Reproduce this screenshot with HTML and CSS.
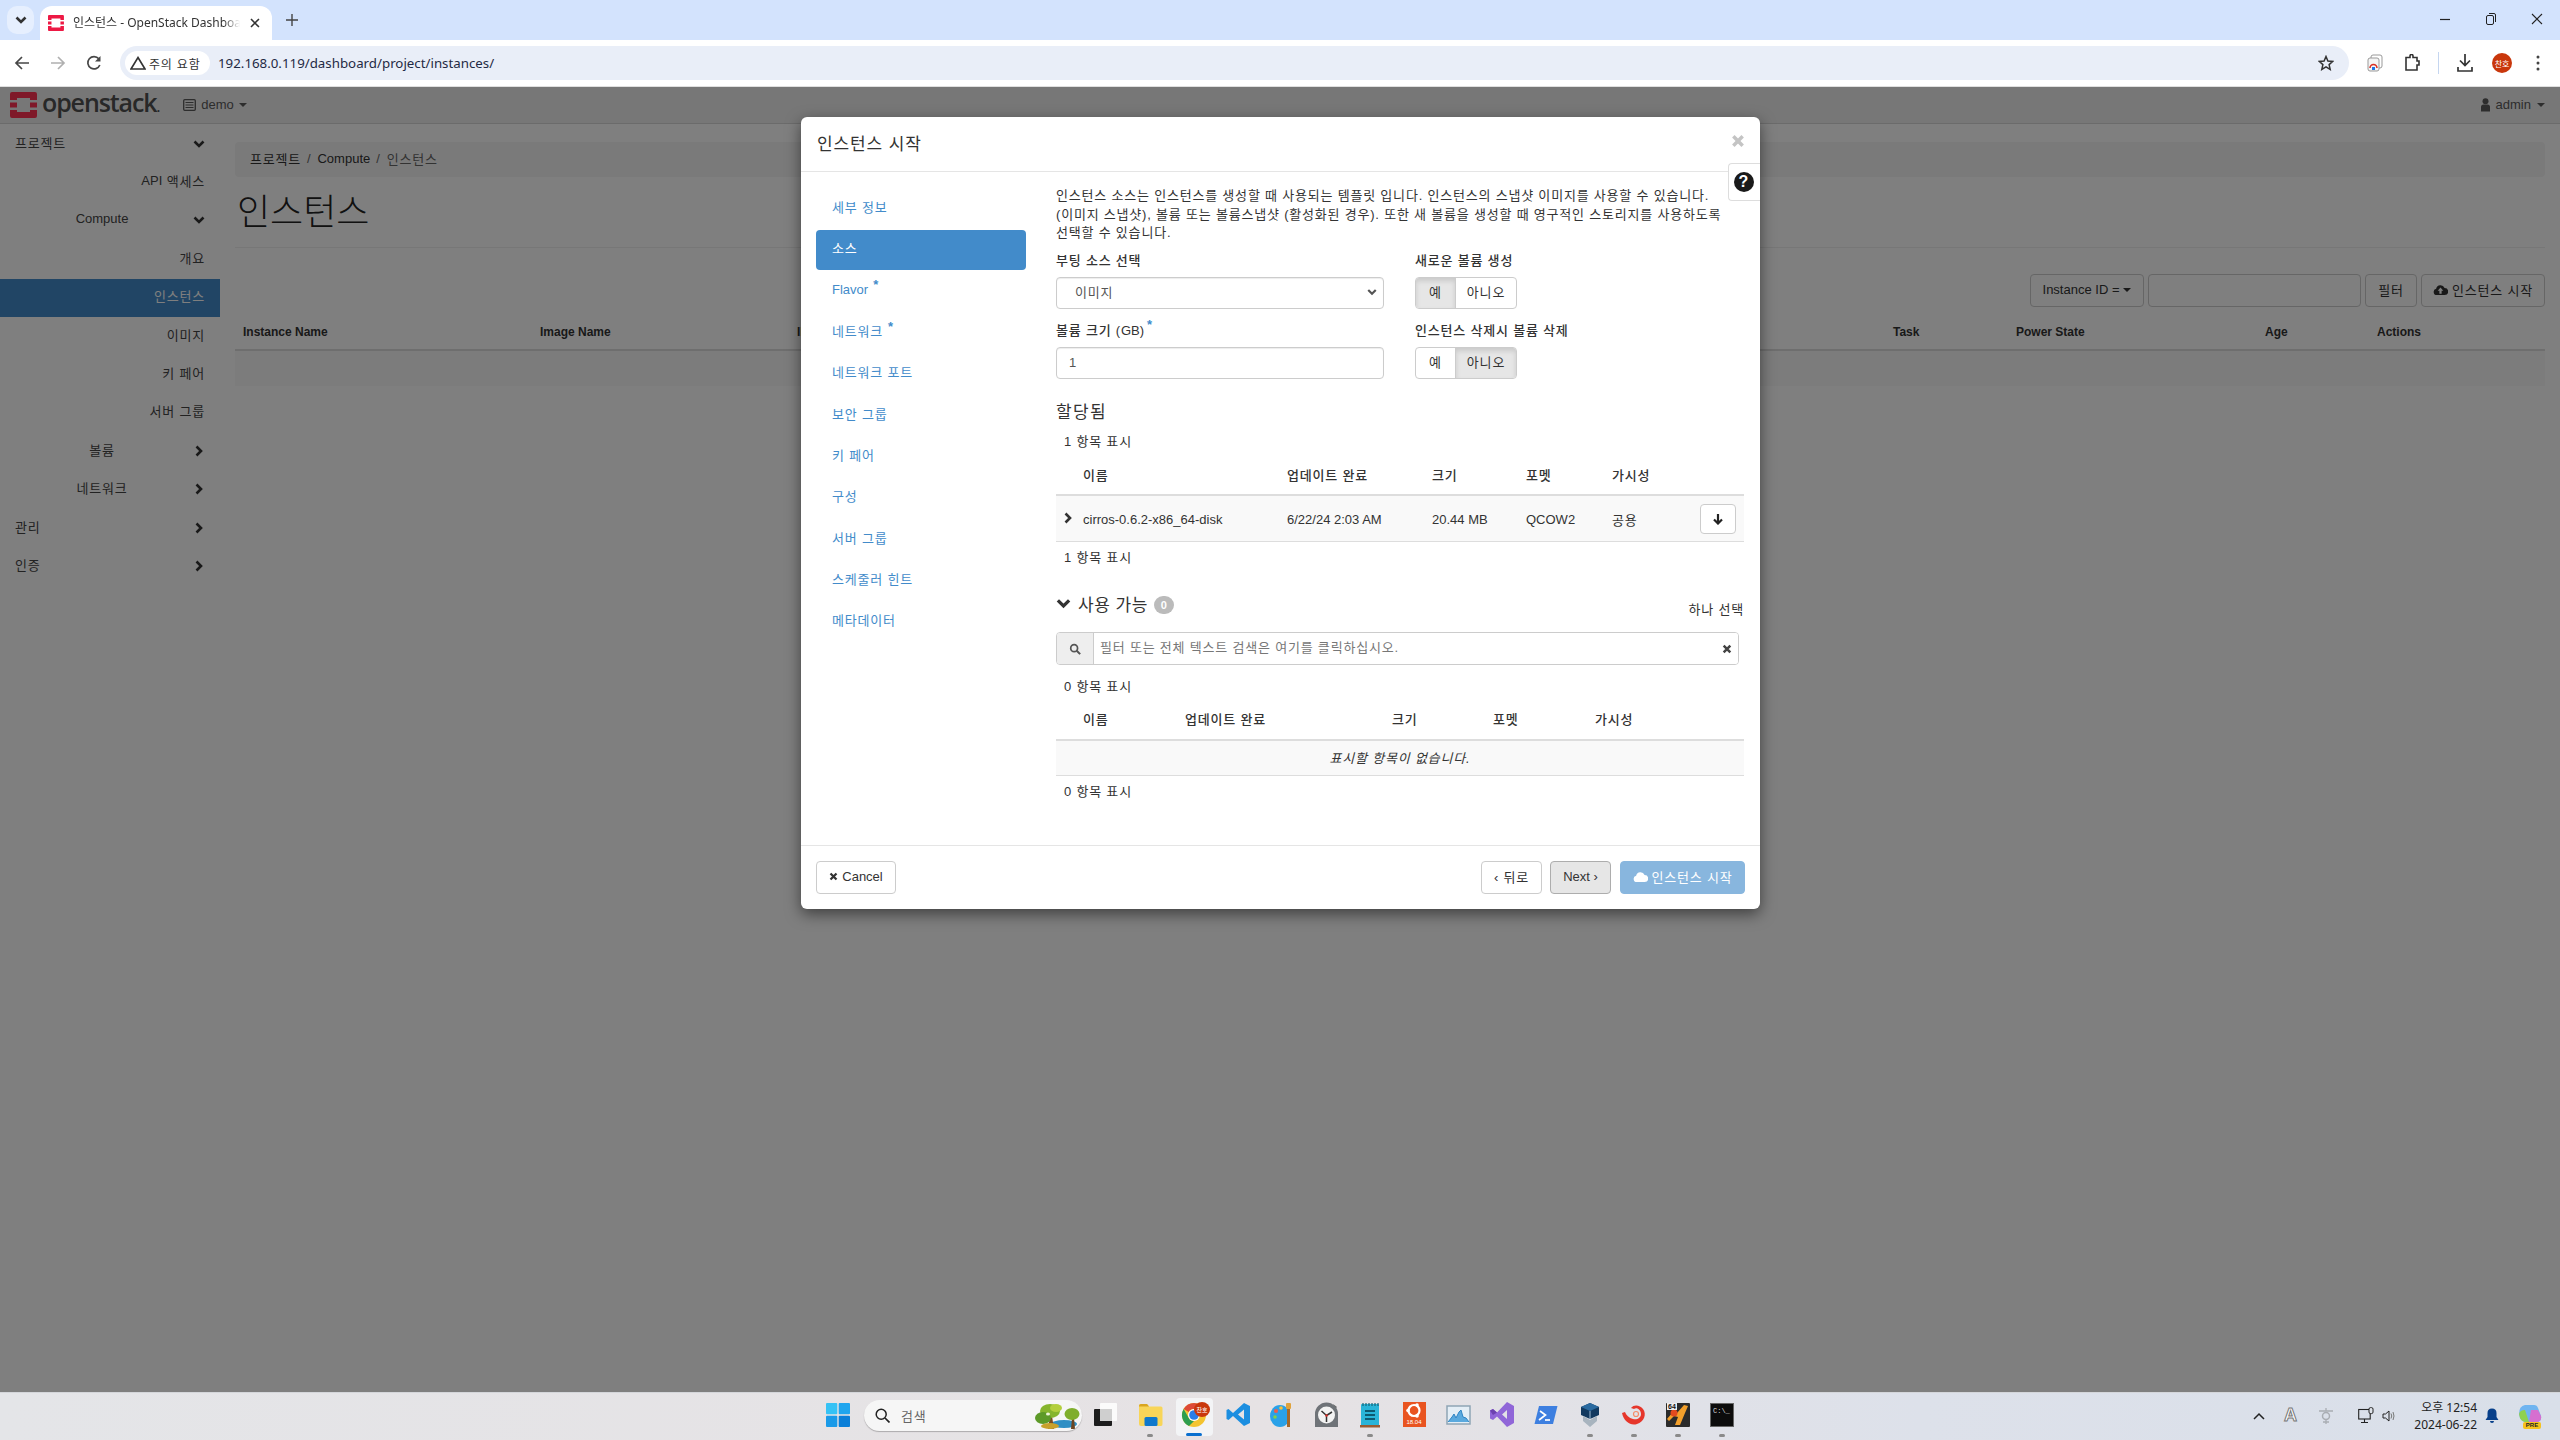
FILE: index.html
```html
<!DOCTYPE html>
<html lang="ko">

<head>
    <meta charset="utf-8" />
    <title>인스턴스 - OpenStack Dashboard</title>
    <link rel="stylesheet" href="styles.css">
</head>

<body>
    <svg class="defs" width="0" height="0">
        <symbol id="i-chev-down" viewBox="0 0 12 12"><path d="M1.5 3.5 L6 8 L10.500 3.500" fill="none" stroke="currentColor" stroke-width="2.600" /></symbol>
        <symbol id="i-chev-right" viewBox="0 0 12 12"><path d="M3.500 1.500 L8 6 L3.500 10.500" fill="none" stroke="currentColor" stroke-width="2.600" /></symbol>
        <symbol id="i-times" viewBox="0 0 12 12"><path d="M2 2 L10 10 M10 2 L2 10" fill="none" stroke="currentColor" stroke-width="3" /></symbol>
        <symbol id="i-cloud" viewBox="0 0 16 14"><path d="M4 13 A3.500 3.500 0 0 1 3.300 6.100 A4.800 4.800 0 0 1 12.400 5.400 A3.800 3.800 0 0 1 12.500 13 Z" fill="currentColor" /><path d="M8 4.800 L11 8.300 H9.200 V11.500 H6.800 V8.300 H5 Z" fill="#fff" /></symbol>
        <symbol id="i-search" viewBox="0 0 14 14"><circle cx="6" cy="6" r="4" fill="none" stroke="currentColor" stroke-width="2" /><path d="M9 9 L13 13" stroke="currentColor" stroke-width="2.400" /></symbol>
    </svg>

    <header class="tabstrip">
        <div class="tab-list-btn"><svg width="12" height="12"><use href="#i-chev-down" /></svg></div>
        <div class="tab">
            <svg class="favicon" width="16" height="16" viewBox="0 0 16 16">
                <path d="M1 0 H15 Q16 0 16 1 V5 H12.500 V3.500 H3.500 V5 H0 V1 Q0 0 1 0 Z M0 11 H3.500 V12.500 H12.500 V11 H16 V15 Q16 16 15 16 H1 Q0 16 0 15 Z M0 6.500 H3.500 V9.500 H0 Z M12.500 6.500 H16 V9.500 H12.500 Z" fill="#ed1944" />
            </svg>
            <span class="tab-title">인스턴스 - OpenStack Dashboard</span>
            <svg class="tab-close" width="10" height="10" viewBox="0 0 10 10"><path d="M1 1 L9 9 M9 1 L1 9" stroke="#333" stroke-width="1.600" /></svg>
        </div>
        <div class="tab-new">
            <svg width="12" height="12" viewBox="0 0 12 12"><path d="M6 0 V12 M0 6 H12" stroke="#444" stroke-width="1.400" /></svg>
        </div>
        <div class="win-controls">
            <svg width="12" height="12" viewBox="0 0 12 12"><path d="M1 6.500 H11" stroke="#222" stroke-width="1.200" /></svg>
            <svg width="12" height="14" viewBox="0 0 12 14"><rect x="1.500" y="3.500" width="7" height="9" rx="1.500" fill="none" stroke="#222" /><path d="M4 1.500 H9 Q10.500 1.500 10.500 3 V10" fill="none" stroke="#222" /></svg>
            <svg width="12" height="12" viewBox="0 0 12 12"><path d="M1 1 L11 11 M11 1 L1 11" stroke="#222" stroke-width="1.100" /></svg>
        </div>
    </header>

    <div class="toolbar">
        <svg class="tool" width="16" height="16" viewBox="0 0 16 16"><path d="M15 8 H2 M8 2 L2 8 L8 14" fill="none" stroke="#474747" stroke-width="1.700" /></svg>
        <svg class="tool" width="16" height="16" viewBox="0 0 16 16"><path d="M1 8 H14 M8 2 L14 8 L8 14" fill="none" stroke="#b0b0b0" stroke-width="1.700" /></svg>
        <svg class="tool" width="16" height="16" viewBox="0 0 16 16"><path d="M13.800 10 A6.200 6.200 0 1 1 12.800 3.800" fill="none" stroke="#474747" stroke-width="1.700" /><path d="M14.500 1 V6.500 H9 Z" fill="#474747" /></svg>
        <div class="omnibox">
            <div class="chip">
                <svg width="16" height="14" viewBox="0 0 16 14"><path d="M8 1.500 L15 13 H1 Z" fill="none" stroke="#333" stroke-width="1.600" /></svg>
                <span>주의 요함</span>
            </div>
            <span class="url">192.168.0.119/dashboard/project/instances/</span>
            <svg class="star" width="16" height="16" viewBox="0 0 16 16"><path d="M8 1.500 L9.900 6 L14.800 6.400 L11.100 9.600 L12.200 14.400 L8 11.900 L3.800 14.400 L4.900 9.600 L1.200 6.400 L6.100 6 Z" fill="none" stroke="#333" stroke-width="1.500" /></svg>
        </div>
        <div class="tool-right">
            <svg width="16" height="20" viewBox="0 0 16 20"><rect x="4" y="2" width="11" height="13" rx="2" fill="#fff" stroke="#999" /><rect x="1" y="5" width="11" height="13" rx="2" fill="#f4f4f4" stroke="#999" /><path d="M3 15 A3.500 3.500 0 0 1 10 15" fill="none" stroke="#d93025" stroke-width="1.600" /><rect x="5" y="14" width="3" height="3" fill="#1a73e8" /></svg>
            <svg width="16" height="18" viewBox="0 0 16 18"><path d="M2 3.500 H6 V2 A1.500 1.500 0 0 1 9 2 V3.500 H13 V7 H15 V11 H13 V16 H2 Z" fill="none" stroke="#333" stroke-width="1.600" /></svg>
            <span class="tool-sep"></span>
            <svg width="18" height="20" viewBox="0 0 18 20"><path d="M9 1 V12 M4 7.500 L9 12.500 L14 7.500 M2 14 V18 H16 V14" fill="none" stroke="#333" stroke-width="1.700" /></svg>
            <span class="avatar">찬호</span>
            <svg width="4" height="16" viewBox="0 0 4 16"><circle cx="2" cy="2" r="1.500" fill="#444" /><circle cx="2" cy="8" r="1.500" fill="#444" /><circle cx="2" cy="14" r="1.500" fill="#444" /></svg>
        </div>
    </div>

    <div class="page">
        <nav class="topnav">
            <a class="brand">
                <svg width="27" height="26" viewBox="0 0 27 26">
                    <path d="M2 0 H25 Q27 0 27 2 V8 H20 V6 H7 V8 H0 V2 Q0 0 2 0 Z M0 18 H7 V20 H20 V18 H27 V24 Q27 26 25 26 H2 Q0 26 0 24 Z M0 10.500 H7 V15.500 H0 Z M20 10.500 H27 V15.500 H20 Z" fill="#ff3352" />
                </svg>
                <span class="brand-text">openstack<small>.</small></span>
            </a>
            <div class="project-pick">
                <svg width="13" height="12" viewBox="0 0 13 12"><rect x="0.700" y="0.700" width="11.600" height="10.600" rx="1" fill="none" stroke="currentColor" stroke-width="1.300" /><path d="M2.500 3.500 H10.500 M2.500 6 H10.500 M2.500 8.500 H10.500" stroke="currentColor" stroke-width="1.200" /></svg>
                <span>demo</span>
                <i class="caret"></i>
            </div>
            <div class="user-pick">
                <svg width="9" height="14" viewBox="0 0 9 14"><circle cx="4.500" cy="3.200" r="3" fill="currentColor" /><path d="M0 13.500 V9 Q0 6.500 2.500 6.500 H6.500 Q9 6.500 9 9 V13.500 Z" fill="currentColor" /></svg>
                <span>admin</span>
                <i class="caret"></i>
            </div>
        </nav>

        <div class="dash">
            <ul class="sidebar">
                <li class="side-row top"><span>프로젝트</span><svg width="12" height="12"><use href="#i-chev-down" /></svg></li>
                <li class="side-row leaf"><b class="latin">API</b>&nbsp;액세스</li>
                <li class="side-row group"><span class="latin">Compute</span><svg width="12" height="12"><use href="#i-chev-down" /></svg></li>
                <li class="side-row leaf">개요</li>
                <li class="side-row leaf active">인스턴스</li>
                <li class="side-row leaf">이미지</li>
                <li class="side-row leaf">키 페어</li>
                <li class="side-row leaf">서버 그룹</li>
                <li class="side-row group"><span>볼륨</span><svg width="12" height="12"><use href="#i-chev-right" /></svg></li>
                <li class="side-row group"><span>네트워크</span><svg width="12" height="12"><use href="#i-chev-right" /></svg></li>
                <li class="side-row top"><span>관리</span><svg width="12" height="12"><use href="#i-chev-right" /></svg></li>
                <li class="side-row top"><span>인증</span><svg width="12" height="12"><use href="#i-chev-right" /></svg></li>
            </ul>

            <main class="content">
                <div class="breadcrumb"><span>프로젝트</span> <b>/</b> <span class="latin">Compute</span> <b>/</b> <em>인스턴스</em></div>
                <h1 class="page-title">인스턴스</h1>
                <div class="table-actions">
                    <button class="btn-dim w-id"><span class="latin">Instance ID =</span> <i class="caret"></i></button>
                    <input class="filter-input" type="text">
                    <button class="btn-dim w-filter">필터</button>
                    <button class="btn-dim w-launch"><svg width="15" height="13"><use href="#i-cloud" /></svg> 인스턴스 시작</button>
                </div>
                <table class="instances">
                    <thead>
                        <tr>
                            <th>Instance Name</th>
                            <th>Image Name</th>
                            <th>IP</th>
                            <th>Task</th>
                            <th>Power State</th>
                            <th>Age</th>
                            <th>Actions</th>
                        </tr>
                    </thead>
                    <tbody>
                        <tr>
                            <td colspan="7"></td>
                        </tr>
                    </tbody>
                </table>
            </main>
        </div>

        <div class="backdrop"></div>

        <section class="modal">
            <div class="modal-head">
                <h2>인스턴스 시작</h2>
                <svg class="modal-close" width="14" height="14"><use href="#i-times" /></svg>
            </div>
            <div class="help-tab"><span>?</span></div>

            <div class="modal-body">
                <ul class="steps">
                    <li>세부 정보</li>
                    <li class="current">소스</li>
                    <li><span class="latin">Flavor</span> <sup>*</sup></li>
                    <li>네트워크 <sup>*</sup></li>
                    <li>네트워크 포트</li>
                    <li>보안 그룹</li>
                    <li>키 페어</li>
                    <li>구성</li>
                    <li>서버 그룹</li>
                    <li>스케줄러 힌트</li>
                    <li>메타데이터</li>
                </ul>

                <div class="step-pane">
                    <p class="desc">인스턴스 소스는 인스턴스를 생성할 때 사용되는 템플릿 입니다. 인스턴스의 스냅샷 이미지를 사용할 수 있습니다.<br>(이미지 스냅샷), 볼륨 또는 볼륨스냅샷 (활성화된 경우). 또한 새 볼륨을 생성할 때 영구적인 스토리지를 사용하도록<br>선택할 수 있습니다.</p>

                    <div class="form-grid">
                        <div>
                            <label>부팅 소스 선택</label>
                            <div class="select"><span>이미지</span><svg width="10" height="10"><use href="#i-chev-down" /></svg></div>
                        </div>
                        <div>
                            <label>새로운 볼륨 생성</label>
                            <div class="toggle"><span class="on yes">예</span><span class="no">아니오</span></div>
                        </div>
                        <div>
                            <label>볼륨 크기 (<span class="latin">GB</span>)<sup>*</sup></label>
                            <input class="text-input" type="text" value="1">
                        </div>
                        <div>
                            <label>인스턴스 삭제시 볼륨 삭제</label>
                            <div class="toggle"><span class="yes">예</span><span class="on no">아니오</span></div>
                        </div>
                    </div>

                    <h3 class="allocated-title">할당됨</h3>
                    <div class="count first">1 항목 표시</div>
                    <table class="grid allocated">
                        <thead>
                            <tr>
                                <th></th>
                                <th>이름</th>
                                <th>업데이트 완료</th>
                                <th>크기</th>
                                <th>포멧</th>
                                <th>가시성</th>
                                <th></th>
                            </tr>
                        </thead>
                        <tbody>
                            <tr>
                                <td class="toggle-cell"><svg width="12" height="12"><use href="#i-chev-right" /></svg></td>
                                <td class="latin">cirros-0.6.2-x86_64-disk</td>
                                <td class="latin">6/22/24 2:03 AM</td>
                                <td class="latin">20.44 MB</td>
                                <td class="latin">QCOW2</td>
                                <td>공용</td>
                                <td class="action-cell"><button class="btn-down"><svg width="12" height="12" viewBox="0 0 12 12"><path d="M6 1 V10 M2 6.500 L6 10.500 L10 6.500" fill="none" stroke="#222" stroke-width="2.200" /></svg></button></td>
                            </tr>
                        </tbody>
                    </table>
                    <div class="count">1 항목 표시</div>

                    <div class="available-head">
                        <svg width="15" height="15" viewBox="0 0 12 12"><use href="#i-chev-down" /></svg>
                        <h3>사용 가능</h3>
                        <span class="badge">0</span>
                        <span class="pick-one">하나 선택</span>
                    </div>
                    <div class="search">
                        <span class="search-addon"><svg width="12" height="12"><use href="#i-search" /></svg></span>
                        <input type="text" placeholder="필터 또는 전체 텍스트 검색은 여기를 클릭하십시오.">
                        <svg class="search-clear" width="10" height="10"><use href="#i-times" /></svg>
                    </div>
                    <div class="count second">0 항목 표시</div>
                    <table class="grid available">
                        <thead>
                            <tr>
                                <th></th>
                                <th>이름</th>
                                <th>업데이트 완료</th>
                                <th>크기</th>
                                <th>포멧</th>
                                <th>가시성</th>
                            </tr>
                        </thead>
                        <tbody>
                            <tr>
                                <td class="empty" colspan="6">표시할 항목이 없습니다.</td>
                            </tr>
                        </tbody>
                    </table>
                    <div class="count">0 항목 표시</div>
                </div>
            </div>

            <div class="modal-foot">
                <button class="btn cancel"><svg width="9" height="9"><use href="#i-times" /></svg> <span class="latin">Cancel</span></button>
                <span class="foot-gap"></span>
                <button class="btn back">&lsaquo; 뒤로</button>
                <button class="btn next"><span class="latin">Next &rsaquo;</span></button>
                <button class="btn launch"><svg width="15" height="13"><use href="#i-cloud" /></svg> 인스턴스 시작</button>
            </div>
        </section>
    </div>

    <footer class="taskbar">
        <div class="tb-icon win">
            <svg width="24" height="24" viewBox="0 0 24 24">
                <rect width="11.300" height="11.300" rx="1" fill="#35c2f5" /><rect x="12.700" width="11.300" height="11.300" rx="1" fill="#1fa5ee" />
                <rect y="12.700" width="11.300" height="11.300" rx="1" fill="#1a9ae8" /><rect x="12.700" y="12.700" width="11.300" height="11.300" rx="1" fill="#0b7fd8" />
            </svg>
        </div>
        <div class="tb-search">
            <svg width="15" height="15" viewBox="0 0 15 15"><circle cx="6.200" cy="6.200" r="5" fill="none" stroke="#222" stroke-width="1.500" /><path d="M10 10 L14.500 14.500" stroke="#222" stroke-width="1.700" /></svg>
            <span>검색</span>
            <svg class="tb-search-art" width="46" height="26" viewBox="0 0 46 26">
                <ellipse cx="30" cy="21" rx="13" ry="4" fill="#2f8fc4" />
                <path d="M14 26 L16 13 H18 L20 26 Z" fill="#7a4c24" />
                <ellipse cx="16" cy="8" rx="10" ry="7" fill="#86b52d" /><ellipse cx="9" cy="15" rx="8" ry="6" fill="#5d9a28" /><ellipse cx="22" cy="5" rx="6" ry="4" fill="#b3cf3d" />
                <path d="M37 26 L38 15 H40 L41 26 Z" fill="#6d4522" />
                <ellipse cx="38" cy="11" rx="7.500" ry="6" fill="#7fae2c" /><ellipse cx="16" cy="23" rx="9" ry="3" fill="#c9a12c" /><ellipse cx="14" cy="11" rx="2" ry="1.500" fill="#eef4d8" />
            </svg>
        </div>
        <div class="tb-icon">
            <svg width="26" height="24" viewBox="0 0 26 24"><rect x="7" y="0" width="17" height="18" rx="1" fill="#fbfbfb" /><rect x="1" y="6" width="18" height="17" rx="1" fill="#1d1d1d" /><rect x="7" y="6" width="12" height="12" fill="#cfcfcf" /></svg>
        </div>
        <div class="tb-icon run">
            <svg width="25" height="24" viewBox="0 0 25 24"><path d="M1 3 Q1 1 3 1 H9 L11 3.500 H23 Q24.500 3.500 24.500 5 V21 Q24.500 23 23 23 H3 Q1 23 1 21 Z" fill="#f8d558" /><path d="M1 3 Q1 1 3 1 H9 L11 3.500 H1 Z" fill="#d9a520" /><rect x="6.500" y="14" width="13" height="9" rx="1.500" fill="#0f78cc" /></svg>
        </div>
        <div class="tb-icon chrome">
            <svg width="26" height="26" viewBox="0 0 26 26">
                <circle cx="13" cy="13" r="12" fill="#f4c430" />
                <path d="M13 1 A12 12 0 0 1 23.400 7 H13 A6 6 0 0 0 7.800 10 L2.600 7 A12 12 0 0 1 13 1 Z" fill="#dd4b39" />
                <path d="M2.600 7 L7.800 16 A6 6 0 0 0 13 19 L8 24 A12 12 0 0 1 2.600 7 Z" fill="#2e9e4f" />
                <circle cx="13" cy="13" r="6" fill="#fff" /><circle cx="13" cy="13" r="4.800" fill="#2b7de9" />
            </svg>
            <span class="chrome-badge">찬호</span>
            <span class="chrome-line"></span>
        </div>
        <div class="tb-icon">
            <svg width="25" height="25" viewBox="0 0 25 25"><path d="M18 1 L24 4 V21 L18 24 L7 14 L2.500 18 L0.500 17 V8 L2.500 7 L7 11 Z M18 7.500 L12 12.500 L18 17.500 Z" fill="#1c8ee0" fill-rule="evenodd" /></svg>
        </div>
        <div class="tb-icon">
            <svg width="24" height="26" viewBox="0 0 24 26"><ellipse cx="10" cy="14" rx="10" ry="11" fill="#2aa1e8" /><circle cx="6" cy="9" r="2" fill="#f15a4a" /><circle cx="5" cy="15" r="1.800" fill="#7fd04a" /><circle cx="11" cy="6" r="1.800" fill="#f7c23c" /><rect x="17" y="5" width="3" height="20" fill="#a3682b" /><rect x="16" y="1" width="5" height="6" rx="1" fill="#e0a33c" /></svg>
        </div>
        <div class="tb-icon">
            <svg width="25" height="26" viewBox="0 0 25 26"><path d="M19 2 L23 5 L21 7 Z" fill="#666" /><path d="M1 12 A11.500 11.500 0 0 1 24 12 V25 H1 Z" fill="#6f7378" /><circle cx="12.500" cy="13" r="8.500" fill="#f3f3f3" /><path d="M12.500 14 V20 M12.500 13.500 L7.500 9 M12.500 13.500 L18 10" stroke="#333" stroke-width="1.500" /><circle cx="12.500" cy="13.500" r="1.300" fill="#d9322a" /></svg>
        </div>
        <div class="tb-icon run">
            <svg width="20" height="26" viewBox="0 0 20 26"><rect x="1" y="2" width="18" height="22" rx="1" fill="#2ab4d8" /><path d="M3 1 V4 M6 1 V4 M9 1 V4 M12 1 V4 M15 1 V4 M18 1 V4" stroke="#17657a" stroke-width="1.200" /><path d="M5 9 H15 M5 13 H15 M5 17 H15" stroke="#0d5870" stroke-width="1.800" /><rect x="0" y="23" width="20" height="2.500" fill="#9a5c32" /></svg>
        </div>
        <div class="tb-icon">
            <div class="ubuntu">
                <svg width="18" height="17" viewBox="0 0 18 17"><circle cx="9" cy="8.500" r="5.500" fill="none" stroke="#fff" stroke-width="2.200" /><circle cx="3" cy="8.500" r="1.800" fill="#fff" /><circle cx="12" cy="3" r="1.800" fill="#fff" /><circle cx="12" cy="14" r="1.800" fill="#fff" /></svg>
                <span>18.04</span>
            </div>
        </div>
        <div class="tb-icon">
            <svg width="25" height="20" viewBox="0 0 25 20"><rect x="1" y="1" width="23" height="18" fill="#e4eef6" stroke="#8fa5b5" stroke-width="1.500" /><path d="M2 17 L6 12 L8 9 L10 13 L13 7 L15 5 L17 12 L20 13 L23 17 Z" fill="#5aa9de" /><path d="M2 17 L6 12 L8 9 L10 13 L13 7 L15 5 L17 12 L20 13 L23 17" fill="none" stroke="#2f84c4" /></svg>
        </div>
        <div class="tb-icon">
            <svg width="24" height="25" viewBox="0 0 24 25"><path d="M17 0 L24 4 V21 L17 25 L7 14.500 L3 18 L0 16.500 V8.500 L3 7 L7 10.500 Z M17 8 L12 12.500 L17 17 Z" fill="#9066d8" fill-rule="evenodd" /><path d="M0 8.500 L3 7 L7 10.500 L3 13 Z" fill="#6c42b0" /></svg>
        </div>
        <div class="tb-icon">
            <svg width="24" height="20" viewBox="0 0 24 20"><path d="M5 1 H23.500 L19 19 H0.500 Z" fill="#3d7fe0" /><path d="M6 6 L11.500 10 L5 15" fill="none" stroke="#fff" stroke-width="1.700" /><path d="M11 15 H16" stroke="#fff" stroke-width="1.700" /></svg>
        </div>
        <div class="tb-icon run">
            <svg width="20" height="26" viewBox="0 0 20 26"><path d="M10 1 L19 5 V13 L10 17 L1 13 V5 Z" fill="#12395f" /><path d="M10 1 L19 5 L10 9 L1 5 Z" fill="#2a6aa0" /><path d="M10 9 V17" stroke="#9ebbd4" /><path d="M3 14 L10 18 L17 14 V19 L10 25 L3 19 Z" fill="#a8b4bf" /></svg>
        </div>
        <div class="tb-icon run">
            <svg width="26" height="22" viewBox="0 0 26 22"><path d="M1 9 C3 18 10 22 16 20 C23 18 26 10 22 5 C19 1 13 0 10 4 L13 5 C16 3 20 6 20 10 C20 14 16 16 12 15 C8 14 5 11 4 8 Z" fill="#e6362b" /><circle cx="15" cy="10" r="2.500" fill="none" stroke="#f58a66" stroke-width="1.200" /></svg>
        </div>
        <div class="tb-icon run matlab">
            <svg width="24" height="24" viewBox="0 0 24 24"><rect width="24" height="24" rx="1" fill="#2b2b2b" /><path d="M1 16 L7 9 L11 10 L18 2 L22 3 L19 10 L14 22 H9 L12 14 L8 13 L3 18 Z" fill="#f3a02c" /><circle cx="8" cy="10" r="3.500" fill="#e24a1f" /></svg>
            <span class="matlab-tag">64</span>
        </div>
        <div class="tb-icon run terminal">
            <span>C:\_</span>
        </div>

        <div class="tray">
            <svg width="12" height="8" viewBox="0 0 12 8"><path d="M1 7 L6 2 L11 7" fill="none" stroke="#222" stroke-width="1.500" /></svg>
            <span class="tray-a">A</span>
            <svg class="tray-gear" width="16" height="16" viewBox="0 0 16 16"><circle cx="8" cy="8" r="3.500" fill="none" stroke="#a9adb3" stroke-width="1.500" /><path d="M1 3 H15 M8 0 V3 M8 12 V16 M5 14 H11" stroke="#a9adb3" stroke-width="1.300" /></svg>
            <svg class="tray-net" width="16" height="17" viewBox="0 0 16 17"><rect x="0.700" y="2.500" width="11.500" height="9.500" fill="none" stroke="#222" stroke-width="1.100" /><path d="M6.500 12 V15 M3 15.500 H10" stroke="#222" stroke-width="1.100" /><rect x="11" y="0.600" width="4" height="6" rx="1.500" fill="#dfe3ea" stroke="#222" /></svg>
            <svg width="15" height="14" viewBox="0 0 15 14"><path d="M1 5 H3.500 L7 2 V12 L3.500 9 H1 Z" fill="none" stroke="#222" /><path d="M9 4.500 Q10.500 7 9 9.500 M11 3 Q13 7 11 11" fill="none" stroke="#777" /></svg>
            <div class="clock"><span>오후 12:54</span><span>2024-06-22</span></div>
            <svg class="tray-bell" width="14" height="15" viewBox="0 0 14 15"><path d="M7 0.500 Q11.500 0.500 11.500 5 V9 L13.500 12 H0.500 L2.500 9 V5 Q2.500 0.500 7 0.500 Z" fill="#073f8a" /><path d="M5 13 H9 A2 2 0 0 1 5 13 Z" fill="#073f8a" /></svg>
            <div class="copilot">
                <svg width="24" height="20" viewBox="0 0 24 20"><path d="M7 1 H16 Q19 1 20 4 L23 12 Q24 18 18 18 H8 Q4 18 2 14 L1 10 Q1 2 7 1 Z" fill="#6fb4f0" /><path d="M13 6 H20 L23 12 Q24 18 18 18 H11 Z" fill="#d66fd0" /><path d="M1 10 Q2 6 7 6 L11 18 H8 Q4 18 2 14 Z" fill="#8fd14f" /></svg>
                <span>PRE</span>
            </div>
        </div>
    </footer>
</body>

</html>
```

FILE: styles.css
```css
* {
    box-sizing: border-box;
}

/* the hangul in the reference runs wider than Noto's, hence the spacing */
body {
    margin: 0;
    width: 2560px;
    height: 1440px;
    overflow: hidden;
    display: flex;
    flex-direction: column;
    font-family: "Liberation Sans", "Noto Sans CJK KR", sans-serif;
    font-size: 13px;
    letter-spacing: 0.8px;
    color: #333;
    background-color: #fff;
}

ul {
    margin: 0;
    padding: 0;
    list-style: none;
}

button,
input {
    font-family: inherit;
    font-size: inherit;
    letter-spacing: inherit;
}

.latin {
    font-weight: normal;
    letter-spacing: 0;
}

.defs {
    position: absolute;
}

.caret {
    display: inline-block;
    width: 0;
    height: 0;
    border-top: 4px solid currentColor;
    border-left: 4px solid transparent;
    border-right: 4px solid transparent;
}

/* browser chrome */
.tabstrip {
    height: 40px;
    flex: none;
    display: flex;
    align-items: flex-end;
    padding-left: 7px;
    font-size: 12px;
    letter-spacing: 0;
    background-color: #d3e3fd;
}

.tab-list-btn {
    width: 27px;
    height: 28px;
    margin-bottom: 6px;
    display: flex;
    align-items: center;
    justify-content: center;
    color: #333;
    background-color: #e6effe;
    border-radius: 10px;
}

.tab {
    width: 232px;
    height: 34px;
    margin-left: 6px;
    padding: 0 12px 0 8px;
    display: flex;
    align-items: center;
    background-color: #fff;
    border-radius: 12px 12px 0 0;
}

.tab-title {
    width: 168px;
    margin: 0 0 2px 9px;
    overflow: hidden;
    white-space: nowrap;
    font-family: "Noto Sans", "Noto Sans CJK KR", sans-serif;
    color: #333;
    -webkit-mask-image: linear-gradient(to right, #000 90%, transparent);
    mask-image: linear-gradient(to right, #000 90%, transparent);
}

.tab-close {
    margin-left: 10px;
}

.tab-new {
    margin: 0 0 14px 14px;
    display: flex;
}

.win-controls {
    margin: 0 17px 14px auto;
    display: flex;
    align-items: center;
    gap: 34px;
}

.toolbar {
    height: 47px;
    flex: none;
    display: flex;
    align-items: center;
    padding-left: 14px;
    letter-spacing: 0;
    background-color: #fff;
    border-bottom: 1px solid #dfdfdf;
}

.tool {
    margin-right: 20px;
}

.omnibox {
    width: 2229px;
    height: 34px;
    margin-left: -2px;
    padding: 0 15px 0 5px;
    display: flex;
    align-items: center;
    background-color: #e9eef8;
    border-radius: 17px;
}

.chip {
    width: 85px;
    height: 24px;
    display: flex;
    align-items: center;
    gap: 3px;
    padding-left: 5px;
    font-size: 12px;
    letter-spacing: 0.8px;
    white-space: nowrap;
    color: #333;
    background-color: #fff;
    border-radius: 12px;
}

.url {
    margin-left: 8px;
    font-family: "Noto Sans", sans-serif;
    font-size: 13.3px;
    color: #1f2a44;
}

.star {
    margin-left: auto;
}

.tool-right {
    width: 200px;
    padding-left: 18px;
    display: flex;
    align-items: center;
}

.tool-right svg:nth-child(2) {
    margin-left: 21px;
}

.tool-sep {
    width: 1px;
    height: 22px;
    margin: 0 17px 0 18px;
    background-color: #c5d6f0;
}

.avatar {
    width: 20px;
    height: 20px;
    margin: 0 24px 0 18px;
    display: flex;
    align-items: center;
    justify-content: center;
    border-radius: 50%;
    font-size: 8px;
    color: #fff;
    background-color: #c9370c;
}

/* dashboard behind the dialog */
.page {
    flex: 1;
    position: relative;
    overflow: hidden;
    background-color: #fff;
}

.topnav {
    height: 37px;
    display: flex;
    align-items: center;
    padding: 0 15px 1px 10px;
    letter-spacing: 0;
    color: #5a5a5a;
    background-color: #efefef;
    border-bottom: 1px solid #d6d6d6;
}

.brand {
    display: flex;
    align-items: center;
    gap: 5px;
}

.brand-text {
    font-family: "Open Sans", sans-serif;
    font-size: 25px;
    font-weight: 600;
    letter-spacing: -1.1px;
    line-height: 26px;
    color: #505050;
}

.brand-text small {
    font-size: 14px;
}

.project-pick {
    margin-left: 24px;
    display: flex;
    align-items: center;
    gap: 5px;
    font-size: 13px;
}

.user-pick {
    margin-left: auto;
    display: flex;
    align-items: center;
    gap: 6px;
    font-size: 13px;
}

.dash {
    display: flex;
}

.sidebar {
    width: 220px;
    flex: none;
    padding-top: 1px;
}

.side-row {
    height: 38.4px;
    display: flex;
    align-items: center;
    padding: 0 15px 4px;
    color: #444;
}

.side-row svg {
    flex: none;
    color: #333;
    margin-top: 3px;
}

.side-row span {
    flex: 1;
}

.side-row.leaf {
    justify-content: flex-end;
}

.side-row.group span {
    text-align: center;
    padding-right: 4px;
}

.side-row.active {
    color: #fff;
    background-color: #428bca;
}

.content {
    width: 2310px;
    margin-left: 15px;
}

.breadcrumb {
    height: 35px;
    margin-top: 18px;
    padding: 0 15px 2px;
    display: flex;
    align-items: center;
    gap: 6px;
    color: #333;
    background-color: #f5f5f5;
    border-radius: 4px;
}

.breadcrumb b {
    font-weight: normal;
    color: #666;
}

.breadcrumb em {
    font-style: normal;
    color: #666;
}

.page-title {
    height: 71px;
    margin: 0;
    padding: 15px 2px 0;
    font-size: 36px;
    font-weight: 300;
    letter-spacing: 0;
    line-height: 42px;
    color: #222;
    border-bottom: 1px solid #eee;
}

.table-actions {
    height: 33px;
    margin-top: 26px;
    display: flex;
    justify-content: flex-end;
    gap: 4px;
}

.btn-dim {
    height: 33px;
    padding: 0 0 2px;
    display: flex;
    align-items: center;
    justify-content: center;
    gap: 4px;
    color: #333;
    background-color: #fff;
    border: 1px solid #ccc;
    border-radius: 4px;
}

.w-id {
    width: 114px;
}

.w-filter {
    width: 52px;
}

.w-launch {
    width: 124px;
}

.filter-input {
    width: 213px;
    border: 1px solid #ccc;
    border-radius: 4px;
}

.instances {
    width: 2310px;
    margin-top: 9px;
    table-layout: fixed;
    border-collapse: collapse;
}

.instances th {
    height: 34px;
    padding: 0 8px 2px;
    text-align: left;
    font-size: 12px;
    letter-spacing: 0;
    border-bottom: 2px solid #ddd;
}

.instances td {
    height: 36px;
    background-color: #f9f9f9;
}

.instances th:nth-child(1) { width: 297px; }
.instances th:nth-child(2) { width: 257px; }
.instances th:nth-child(3) { width: 1096px; }
.instances th:nth-child(4) { width: 123px; }
.instances th:nth-child(5) { width: 249px; }
.instances th:nth-child(6) { width: 112px; }
.instances th:nth-child(7) { width: 176px; }

.backdrop {
    position: absolute;
    inset: 0;
    background-color: rgba(0, 0, 0, 0.5);
}

/* launch instance dialog */
.modal {
    position: absolute;
    left: 801px;
    top: 30px;
    width: 959px;
    height: 792px;
    display: flex;
    flex-direction: column;
    background-color: #fff;
    border-radius: 6px;
    box-shadow: 0 5px 15px rgba(0, 0, 0, 0.5);
}

.modal-head {
    height: 55px;
    flex: none;
    display: flex;
    align-items: center;
    padding: 0 15px 0 16px;
    border-bottom: 1px solid #e5e5e5;
}

.modal-head h2 {
    margin: 0 0 3px;
    font-size: 17px;
    font-weight: 400;
    letter-spacing: 0.9px;
    color: #333;
}

.modal-close {
    margin-left: auto;
    margin-bottom: 6px;
    color: #c4c4c4;
}

.help-tab {
    position: absolute;
    top: 46px;
    right: 0;
    width: 32px;
    height: 38px;
    padding-right: 2px;
    display: flex;
    align-items: center;
    justify-content: center;
    background-color: #fff;
    border: 1px solid #ddd;
    border-right: none;
    border-radius: 4px 0 0 4px;
}

.help-tab span {
    width: 20px;
    height: 20px;
    display: flex;
    align-items: center;
    justify-content: center;
    font-size: 16px;
    font-weight: bold;
    letter-spacing: 0;
    color: #fff;
    background-color: #1a1a1a;
    border-radius: 50%;
}

.modal-body {
    flex: 1;
    display: flex;
    padding-left: 15px;
}

.steps {
    width: 210px;
    flex: none;
    padding-top: 17px;
    display: flex;
    flex-direction: column;
    gap: 2px;
}

.steps li {
    height: 39.3px;
    padding: 0 0 4px 16px;
    display: flex;
    align-items: center;
    gap: 3px;
    color: #428bca;
    border-radius: 4px;
}

.steps li.current {
    color: #fff;
    background-color: #428bca;
}

sup {
    line-height: 0;
    margin-left: 2px;
    font-size: 13px;
    font-weight: bold;
    letter-spacing: 0;
    color: #428bca;
}

.steps sup {
    margin-top: -8px;
}

.step-pane {
    width: 688px;
    margin-left: 30px;
    padding-top: 15px;
}

.desc {
    margin: 0;
    line-height: 18.5px;
    white-space: nowrap;
    color: #333;
}

.form-grid {
    margin-top: 9px;
    display: grid;
    grid-template-columns: 328px 1fr;
    column-gap: 31px;
    row-gap: 13px;
}

.form-grid label {
    height: 18px;
    margin-bottom: 7px;
    display: block;
    font-weight: 500;
    line-height: 18px;
}

.select,
.text-input {
    width: 328px;
    height: 32px;
    border: 1px solid #ccc;
    border-radius: 4px;
    box-shadow: inset 0 1px 1px rgba(0, 0, 0, 0.075);
}

.select {
    padding: 0 6px 2px 18px;
    display: flex;
    align-items: center;
    justify-content: space-between;
    color: #555;
}

.select svg {
    color: #555;
}

.text-input {
    padding: 0 12px;
    color: #555;
}

.toggle {
    width: 102px;
    height: 32px;
    display: flex;
    border: 1px solid #ccc;
    border-radius: 4px;
    overflow: hidden;
}

.toggle span {
    display: flex;
    align-items: center;
    justify-content: center;
    padding-bottom: 2px;
}

.toggle .yes {
    width: 39px;
}

.toggle .no {
    flex: 1;
    border-left: 1px solid #ccc;
}

.toggle .on {
    background-color: #e6e6e6;
    box-shadow: inset 0 3px 5px rgba(0, 0, 0, 0.125);
}

.allocated-title {
    height: 24px;
    margin: 22px 0 0;
    font-size: 17px;
    font-weight: 400;
    letter-spacing: 1.3px;
    line-height: 24px;
}

.count {
    height: 18px;
    margin-top: 7px;
    padding-left: 8px;
    line-height: 18px;
}

.count.first {
    margin-top: 8px;
}

.count.second {
    margin-top: 13px;
}

.grid {
    width: 688px;
    table-layout: fixed;
    border-collapse: collapse;
}

.grid th {
    height: 33px;
    padding: 0 8px 6px;
    text-align: left;
    font-weight: 500;
    border-bottom: 2px solid #ddd;
}

.allocated {
    margin-top: 11px;
}

.available {
    margin-top: 8px;
}

.available th {
    height: 36px;
}

.grid td {
    padding: 2px 8px 0;
    background-color: #f9f9f9;
    border-bottom: 1px solid #ddd;
}

.allocated td {
    height: 47px;
}

.allocated th:nth-child(1) { width: 19px; }
.allocated th:nth-child(2) { width: 204px; }
.allocated th:nth-child(3) { width: 145px; }
.allocated th:nth-child(4) { width: 94px; }
.allocated th:nth-child(5) { width: 86px; }
.allocated th:nth-child(6) { width: 86px; }
.allocated th:nth-child(7) { width: 54px; }

.available th:nth-child(1) { width: 19px; }
.available th:nth-child(2) { width: 102px; }
.available th:nth-child(3) { width: 207px; }
.available th:nth-child(4) { width: 101px; }
.available th:nth-child(5) { width: 102px; }
.available th:nth-child(6) { width: 157px; }

.grid td.toggle-cell {
    padding: 2px 0 0 6px;
    color: #333;
}

.grid td.action-cell {
    padding: 2px 8px 0 0;
    text-align: right;
}

.btn-down {
    width: 36px;
    height: 30px;
    padding: 2px 0 0;
    background-color: #fff;
    border: 1px solid #ccc;
    border-radius: 4px;
}

.available td.empty {
    height: 35px;
    padding: 0 8px;
    text-align: center;
    font-style: italic;
}

.available-head {
    height: 24px;
    margin-top: 24px;
    display: flex;
    align-items: center;
    color: #333;
}

.available-head h3 {
    margin: 0 0 0 7px;
    font-size: 17px;
    font-weight: 400;
    letter-spacing: 0.5px;
}

.badge {
    width: 20px;
    height: 18px;
    margin: 4px 0 0 6px;
    display: flex;
    align-items: center;
    justify-content: center;
    font-size: 11px;
    font-weight: bold;
    letter-spacing: 0;
    color: #fff;
    background-color: #bbb;
    border-radius: 10px;
}

.pick-one {
    margin: 10px 0 0 auto;
}

.search {
    width: 683px;
    height: 33px;
    margin-top: 17px;
    position: relative;
    display: flex;
    border: 1px solid #ccc;
    border-radius: 4px;
    overflow: hidden;
}

.search-addon {
    width: 37px;
    display: flex;
    align-items: center;
    justify-content: center;
    color: #555;
    background-color: #eee;
    border-right: 1px solid #ccc;
}

.search input {
    flex: 1;
    padding: 0 6px 2px;
    border: none;
    outline: none;
}

.search input::placeholder {
    color: #777;
}

.search-clear {
    position: absolute;
    right: 6px;
    top: 11px;
    color: #444;
}

.modal-foot {
    height: 64px;
    flex: none;
    display: flex;
    align-items: flex-start;
    gap: 8px;
    padding: 15px 15px 0;
    border-top: 1px solid #e5e5e5;
}

.foot-gap {
    flex: 1;
}

.btn {
    height: 33px;
    display: flex;
    align-items: center;
    justify-content: center;
    gap: 4px;
    padding: 0 0 2px;
    color: #333;
    background-color: #fff;
    border: 1px solid #ccc;
    border-radius: 4px;
}

.cancel {
    width: 80px;
}

.back,
.next {
    width: 61px;
}

.next {
    background-color: #e6e6e6;
    border-color: #adadad;
}

.launch {
    width: 125px;
    margin-left: 1px;
    color: #fff;
    background-color: #88b6de;
    border-color: #88b6de;
}

/* windows taskbar */
.taskbar {
    height: 48px;
    flex: none;
    padding-left: 816px;
    padding-right: 18px;
    display: flex;
    align-items: center;
    letter-spacing: 0;
    background: linear-gradient(to right, #e4e5e8 0%, #e6e2e4 50%, #dde1ea 75%, #d9dfe9 100%);
    border-top: 1px solid #d4d6da;
}

.tb-icon {
    width: 44px;
    height: 47px;
    flex: none;
    position: relative;
    display: flex;
    align-items: center;
    justify-content: center;
    padding-bottom: 4px;
}

.tb-icon.run::after {
    content: "";
    position: absolute;
    left: 19px;
    bottom: 3px;
    width: 6px;
    height: 3px;
    border-radius: 2px;
    background-color: #8a8a8a;
}

.tb-icon.chrome::before {
    content: "";
    position: absolute;
    left: 4px;
    top: 5px;
    width: 37px;
    height: 38px;
    border-radius: 4px;
    background-color: #f3f4f6;
}

.tb-icon.chrome svg {
    position: relative;
}

.chrome-badge {
    position: absolute;
    left: 22px;
    top: 9px;
    width: 16px;
    height: 15px;
    border-radius: 50%;
    display: flex;
    align-items: center;
    justify-content: center;
    font-size: 6px;
    color: #fff;
    background-color: #c9370c;
}

.chrome-line {
    position: absolute;
    left: 14px;
    bottom: 4px;
    width: 16px;
    height: 3px;
    border-radius: 2px;
    background-color: #0a6fcf;
}

.tb-search {
    width: 218px;
    height: 31px;
    margin: 0 2px 2px 4px;
    padding-left: 11px;
    flex: none;
    display: flex;
    align-items: center;
    gap: 11px;
    color: #666;
    font-size: 13px;
    letter-spacing: 0.8px;
    background-color: #f6f6f6;
    border-radius: 16px;
    box-shadow: 0 1px 1px rgba(0, 0, 0, 0.25);
    overflow: hidden;
}

.tb-search-art {
    margin-left: auto;
    margin-right: 2px;
}

.ubuntu {
    width: 23px;
    height: 25px;
    display: flex;
    flex-direction: column;
    align-items: center;
    background-color: #e95420;
}

.ubuntu span {
    font-size: 6px;
    line-height: 7px;
    color: #fff;
}

.matlab-tag {
    position: absolute;
    left: 11px;
    top: 10px;
    padding: 0 1px;
    font-size: 7px;
    line-height: 7px;
    font-weight: bold;
    color: #111;
    background-color: #eee;
}

.terminal span {
    width: 24px;
    height: 24px;
    padding: 3px 0 0 2px;
    font-family: "Liberation Mono", monospace;
    font-size: 7px;
    color: #ddd;
    background-color: #0c0c0c;
    border: 1px solid #666;
}

.tray {
    margin-left: auto;
    display: flex;
    align-items: center;
    padding-bottom: 2px;
}

.tray-a {
    margin-left: 19px;
    font-family: "Liberation Sans", sans-serif;
    font-size: 18px;
    font-weight: bold;
    color: #fff;
    -webkit-text-stroke: 1px #777;
}

.tray-gear {
    margin-left: 21px;
}

.tray-net {
    margin: 0 8px 0 24px;
}

.clock {
    width: 80px;
    display: flex;
    flex-direction: column;
    align-items: flex-end;
    font-family: "Noto Sans", "Noto Sans CJK KR", sans-serif;
    font-size: 12px;
    line-height: 17px;
    color: #222;
}

.tray-bell {
    margin-left: 8px;
}

.copilot {
    margin-left: 19px;
    position: relative;
    width: 24px;
    height: 24px;
}

.copilot span {
    position: absolute;
    left: 5px;
    bottom: -1px;
    width: 18px;
    padding: 0 1px;
    font-size: 6px;
    line-height: 7px;
    font-weight: bold;
    text-align: center;
    color: #222;
    background-color: #f6c21c;
    border-radius: 2px;
}
```
